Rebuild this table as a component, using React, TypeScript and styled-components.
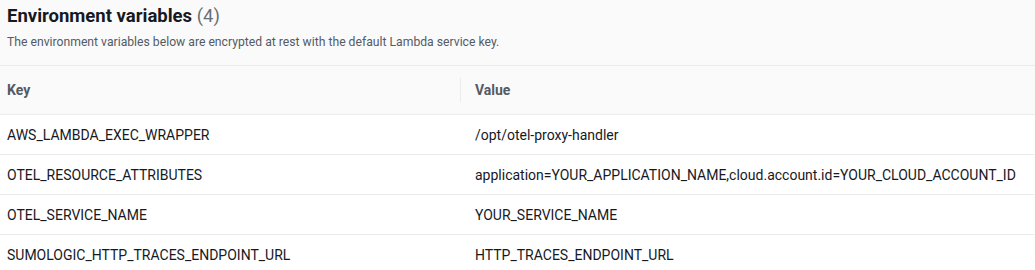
import React from "react";
import styled, { createGlobalStyle } from "styled-components";

const Global = createGlobalStyle`
  html, body { margin: 0; padding: 0; background: #ffffff; }
  body { font-family: Roboto, "Noto Sans", Arial, sans-serif; color: #16191f; }
`;

const Panel = styled.div`
  width: 1035px;
  height: 270px;
  overflow: hidden;
  background: #ffffff;
`;

const Header = styled.div`
  background: #fafafa;
  padding: 4px 7px 0 7px;
  height: 66px;
  box-sizing: border-box;
  border-bottom: 1px solid #eaeded;
`;

const Title = styled.h2`
  margin: 0;
  font-size: 18.5px;
  line-height: 24px;
  font-weight: 700;
  color: #16191f;
`;

const Count = styled.span`
  font-weight: 400;
  color: #687078;
`;

const Description = styled.p`
  margin: 6px 0 0 0;
  font-size: 12.2px;
  line-height: 16px;
  color: #545b64;
`;

const Table = styled.div`
  display: grid;
  grid-template-columns: 460px 1fr;
`;

const HeadCell = styled.div<{ $divider?: boolean }>`
  height: 49px;
  box-sizing: border-box;
  background: #fafafa;
  border-bottom: 1px solid #eaeded;
  display: flex;
  align-items: center;
  padding-left: ${(p) => (p.$divider ? "0" : "7px")};
  font-size: 14px;
  font-weight: 700;
  color: #545b64;
`;

const Divider = styled.span`
  width: 1px;
  height: 24px;
  background: #eaeded;
  margin-right: 14px;
`;

const Cell = styled.div<{ $indent: number }>`
  height: 40px;
  box-sizing: border-box;
  border-bottom: 1px solid #eaeded;
  display: flex;
  align-items: center;
  padding-left: ${(p) => p.$indent}px;
  font-size: 14px;
  color: #16191f;
  white-space: nowrap;
`;

const rows: [string, string][] = [
  ["AWS_LAMBDA_EXEC_WRAPPER", "/opt/otel-proxy-handler"],
  [
    "OTEL_RESOURCE_ATTRIBUTES",
    "application=YOUR_APPLICATION_NAME,cloud.account.id=YOUR_CLOUD_ACCOUNT_ID",
  ],
  ["OTEL_SERVICE_NAME", "YOUR_SERVICE_NAME"],
  ["SUMOLOGIC_HTTP_TRACES_ENDPOINT_URL", "HTTP_TRACES_ENDPOINT_URL"],
];

export default function App() {
  return (
    <>
      <Global />
      <Panel>
        <Header>
          <Title>
            Environment variables <Count>(4)</Count>
          </Title>
          <Description>
            The environment variables below are encrypted at rest with the default Lambda service key.
          </Description>
        </Header>
        <Table>
          <HeadCell>Key</HeadCell>
          <HeadCell $divider>
            <Divider />
            Value
          </HeadCell>
          {rows.map(([k, v]) => (
            <React.Fragment key={k}>
              <Cell $indent={7}>{k}</Cell>
              <Cell $indent={15}>{v}</Cell>
            </React.Fragment>
          ))}
        </Table>
      </Panel>
    </>
  );
}
